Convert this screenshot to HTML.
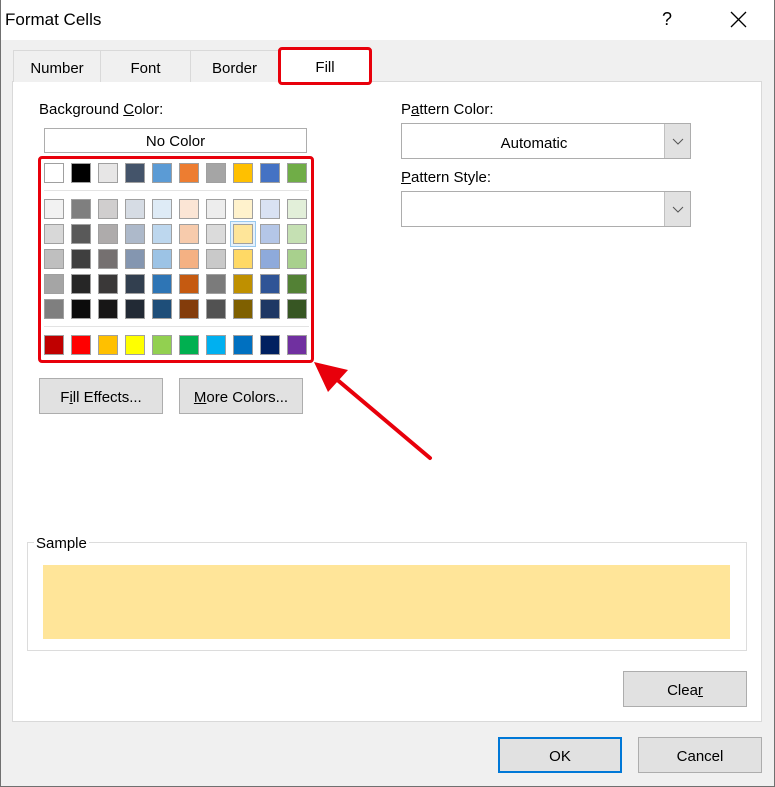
<!DOCTYPE html>
<html><head><style>
*{margin:0;padding:0;box-sizing:border-box}
body{width:775px;height:787px;background:#f0f0f0;font-family:"Liberation Sans",sans-serif;font-size:15px;color:#000;position:relative;overflow:hidden}
.a{position:absolute}
.btn{position:absolute;background:#e1e1e1;border:1px solid #adadad;text-align:center;font-size:15px}
.sw{position:absolute;width:20px;height:20px;border:1px solid #a0a0a0}
.tab{position:absolute;top:50px;height:32px;border:1px solid #d9d9d9;border-bottom:none;text-align:center;line-height:35px;font-size:15px;background:#f0f0f0}
.combo{position:absolute;left:401px;width:290px;height:36px;background:#fff;border:1px solid #adadad}
.dd{position:absolute;right:0;top:0;width:26px;height:34px;background:#e1e1e1;border-left:1px solid #c0c0c0}
</style></head><body>
<div class="a" style="left:0;top:0;width:775px;height:787px;border:1px solid #707070;border-top:none"></div>
<div class="a" style="left:1px;top:0;width:773px;height:40px;background:#fff"></div>
<div class="a" style="left:5px;top:10px;font-size:17px">Format Cells</div>
<div class="a" style="left:662px;top:9px;font-size:18px">?</div>
<svg class="a" style="left:730px;top:11px" width="17" height="17"><path d="M1 1L16 16M16 1L1 16" stroke="#000" stroke-width="1.3"/></svg>

<div class="a" style="left:12px;top:81px;width:750px;height:641px;background:#fff;border:1px solid #d9d9d9"></div>
<div class="tab" style="left:13px;width:88px">Number</div>
<div class="tab" style="left:100px;width:91px">Font</div>
<div class="tab" style="left:190px;width:89px">Border</div>
<div class="tab" style="left:278px;width:94px;background:#fff;height:33px;top:49px">Fill</div>
<div class="a" style="left:278px;top:47px;width:94px;height:38px;border:3px solid #e8000b;border-radius:4px"></div>

<div class="a" style="left:39px;top:101px">Background <u>C</u>olor:</div>
<div class="a" style="left:44px;top:128px;width:263px;height:25px;border:1px solid #adadad;text-align:center;line-height:25px">No Color</div>
<div class="a" style="left:44px;top:190px;width:265px;height:1px;background:#e3e3e3"></div>
<div class="a" style="left:44px;top:326px;width:265px;height:1px;background:#e3e3e3"></div>
<div id="g"></div>
<div class="a" style="left:38px;top:156px;width:276px;height:207px;border:3px solid #e8000b;border-radius:4px"></div>

<svg class="a" style="left:300px;top:350px" width="140" height="115"><path d="M130 108L28 22" stroke="#e8000b" stroke-width="4" stroke-linecap="round"/><path d="M14 12L48 20L28 42Z" fill="#e8000b"/></svg>

<div class="btn" style="left:39px;top:378px;width:124px;height:36px;line-height:37px">F<u>i</u>ll Effects...</div>
<div class="btn" style="left:179px;top:378px;width:124px;height:36px;line-height:37px"><u>M</u>ore Colors...</div>

<div class="a" style="left:401px;top:101px">P<u>a</u>ttern Color:</div>
<div class="combo" style="top:123px"><div class="a" style="left:0;width:264px;text-align:center;top:11px">Automatic</div><div class="dd"><svg width="26" height="34"><path d="M8 15L13 20L18 15" stroke="#555" fill="none"/></svg></div></div>
<div class="a" style="left:401px;top:169px"><u>P</u>attern Style:</div>
<div class="combo" style="top:191px"><div class="dd"><svg width="26" height="34"><path d="M8 15L13 20L18 15" stroke="#555" fill="none"/></svg></div></div>

<div class="a" style="left:27px;top:542px;width:720px;height:109px;border:1px solid #dcdcdc"></div>
<div class="a" style="left:34px;top:535px;background:#fff;padding:0 2px">Sample</div>
<div class="a" style="left:43px;top:565px;width:687px;height:74px;background:#ffe599"></div>

<div class="btn" style="left:623px;top:671px;width:124px;height:36px;line-height:37px">Clea<u>r</u></div>
<div class="btn" style="left:498px;top:737px;width:124px;height:36px;line-height:35px;border:2px solid #0078d7">OK</div>
<div class="btn" style="left:638px;top:737px;width:124px;height:36px;line-height:37px">Cancel</div>

<script>
var rows=[
["fff","000","e7e6e6","44546a","5b9bd5","ed7d31","a5a5a5","ffc000","4472c4","70ad47"],
["f2f2f2","7f7f7f","d0cece","d6dce4","deebf6","fbe5d5","ededed","fff2cc","d9e2f3","e2efd9"],
["d8d8d8","595959","aeabab","adb9ca","bdd7ee","f7cbac","dbdbdb","fee599","b4c6e7","c5e0b3"],
["bfbfbf","3f3f3f","757070","8496b0","9cc3e5","f4b183","c9c9c9","ffd965","8eaadb","a8d08d"],
["a5a5a5","262626","3a3838","323f4f","2e75b5","c55a11","7b7b7b","bf9000","2f5496","538135"],
["7f7f7f","0c0c0c","171616","222a35","1e4e79","833c0b","525252","7f6000","1f3864","375623"],
["c00000","ff0000","ffc000","ffff00","92d050","00b050","00b0f0","0070c0","002060","7030a0"]];
var ys=[163,199,224,249,274,299,335],h="";
rows.forEach(function(r,i){r.forEach(function(c,j){var x=44+27*j,y=ys[i];
if(i==2&&j==7)h+='<div class="a" style="left:'+(x-3)+'px;top:'+(y-3)+'px;width:26px;height:26px;border:1px solid #99c9ef;background:#e5f1fb"></div>';
h+='<div class="sw" style="left:'+x+'px;top:'+y+'px;background:#'+c+'"></div>';});});
document.getElementById("g").innerHTML=h;
</script>
</body></html>
